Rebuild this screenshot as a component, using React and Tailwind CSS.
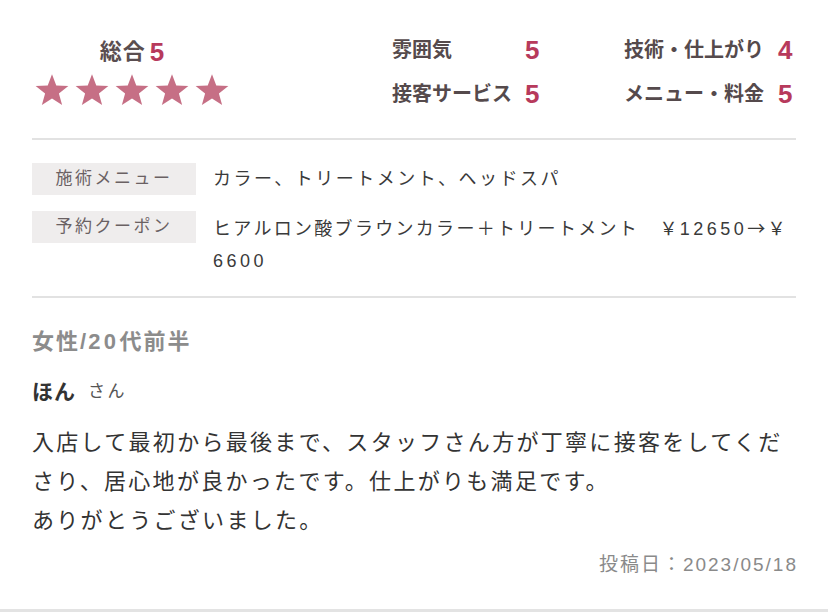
import React from "react";

const Star = () => (
  <svg width="36" height="35" viewBox="0 0 24 23" className="block">
    <path
      d="M12 0.6 L14.85 8.1 L22.9 8.45 L16.6 13.45 L18.75 21.2 L12 16.8 L5.25 21.2 L7.4 13.45 L1.1 8.45 L9.15 8.1 Z"
      fill="#c66f85"
    />
  </svg>
);

export default function App() {
  const font = "font-['Liberation_Sans','Noto_Sans_CJK_JP',sans-serif]";
  const cjk = "font-['Noto_Sans_CJK_JP',sans-serif]";
  return (
    <div className={`w-[828px] h-[612px] bg-white border-b-[3px] border-[#e3e3e3] ${font}`}>
      <div className="px-[32px]">
        {/* Top ratings */}
        <div className="flex pt-[36px] pb-[28px] border-b-2 border-[#e2e2e2]">
          <div className="w-[200px] flex flex-col items-center">
            <div className="h-[32px] flex items-center font-bold leading-[32px]">
              <span className="text-[22px] tracking-[1px] text-[#5a4e50]">総合</span>
              <span className="text-[26px] text-[#b73a5c] ml-[4px]">5</span>
            </div>
            <div className="flex gap-[4px] mt-[5px]">
              <Star />
              <Star />
              <Star />
              <Star />
              <Star />
            </div>
          </div>
          <div className="ml-[160px] -mt-[2px] flex flex-col gap-[12px]">
            <div className="flex h-[32px] items-center font-bold">
              <div className="w-[232px] flex items-center">
                <span className="w-[133px] text-[20px] text-[#554a4c]">雰囲気</span>
                <span className="text-[26px] text-[#b73a5c]">5</span>
              </div>
              <div className="flex items-center">
                <span className="w-[154px] text-[20px] text-[#554a4c]">技術・仕上がり</span>
                <span className="text-[26px] text-[#b73a5c]">4</span>
              </div>
            </div>
            <div className="flex h-[32px] items-center font-bold">
              <div className="w-[232px] flex items-center">
                <span className="w-[133px] text-[20px] text-[#554a4c]">接客サービス</span>
                <span className="text-[26px] text-[#b73a5c]">5</span>
              </div>
              <div className="flex items-center">
                <span className="w-[154px] text-[20px] text-[#554a4c]">メニュー・料金</span>
                <span className="text-[26px] text-[#b73a5c]">5</span>
              </div>
            </div>
          </div>
        </div>

        {/* Menu / coupon */}
        <div className="pt-[23px] pb-[19px] border-b-2 border-[#e2e2e2] flex flex-col gap-[16px]">
          <div className="flex items-start">
            <div className="w-[164px] h-[32px] flex items-center justify-center bg-[#efeded] text-[17px] tracking-[2.5px] text-[#6a6163]">
              施術メニュー
            </div>
            <div className="ml-[17px] text-[18px] leading-[32px] tracking-[2.5px] text-[#3a3a3a]">
              カラー、トリートメント、ヘッドスパ
            </div>
          </div>
          <div className="flex items-start">
            <div className="w-[164px] h-[32px] shrink-0 flex items-center justify-center bg-[#efeded] text-[17px] tracking-[2.5px] text-[#6a6163]">
              予約クーポン
            </div>
            <div className="ml-[17px] text-[18px] leading-[32px] tracking-[2.3px] text-[#3a3a3a]">
              <div className="whitespace-nowrap">
                ヒアルロン酸ブラウンカラー＋トリートメント　￥<span className="tracking-[3.5px]">12650</span>
                <span className={cjk}>→</span>￥
              </div>
              <div className="tracking-[3.5px]">6600</div>
            </div>
          </div>
        </div>

        {/* Review */}
        <div className="pt-[28px]">
          <div className="text-[22px] leading-[32px] tracking-[2px] font-bold text-[#8c8c8c]">
            女性/<span className="tracking-[3.5px]">20</span>代前半
          </div>
          <div className="mt-[18px] h-[32px] flex items-center">
            <span className="text-[21px] tracking-[1px] font-bold text-[#333]">ほん</span>
            <span className="ml-[12px] text-[17px] tracking-[2.5px] text-[#555]">さん</span>
          </div>
          <p className="mt-[15px] text-[22px] leading-[39px] tracking-[2.3px] text-[#333]">
            入店して最初から最後まで、スタッフさん方が丁寧に接客をしてくだ<br />
            さり、居心地が良かったです。仕上がりも満足です。<br />
            ありがとうございました。
          </p>
          <div className="mt-[11px] text-right text-[19px] leading-[28px] tracking-[2px] text-[#8a8a8a] -mr-[2px]">
            投稿日：2023/05/18
          </div>
        </div>
      </div>
    </div>
  );
}
